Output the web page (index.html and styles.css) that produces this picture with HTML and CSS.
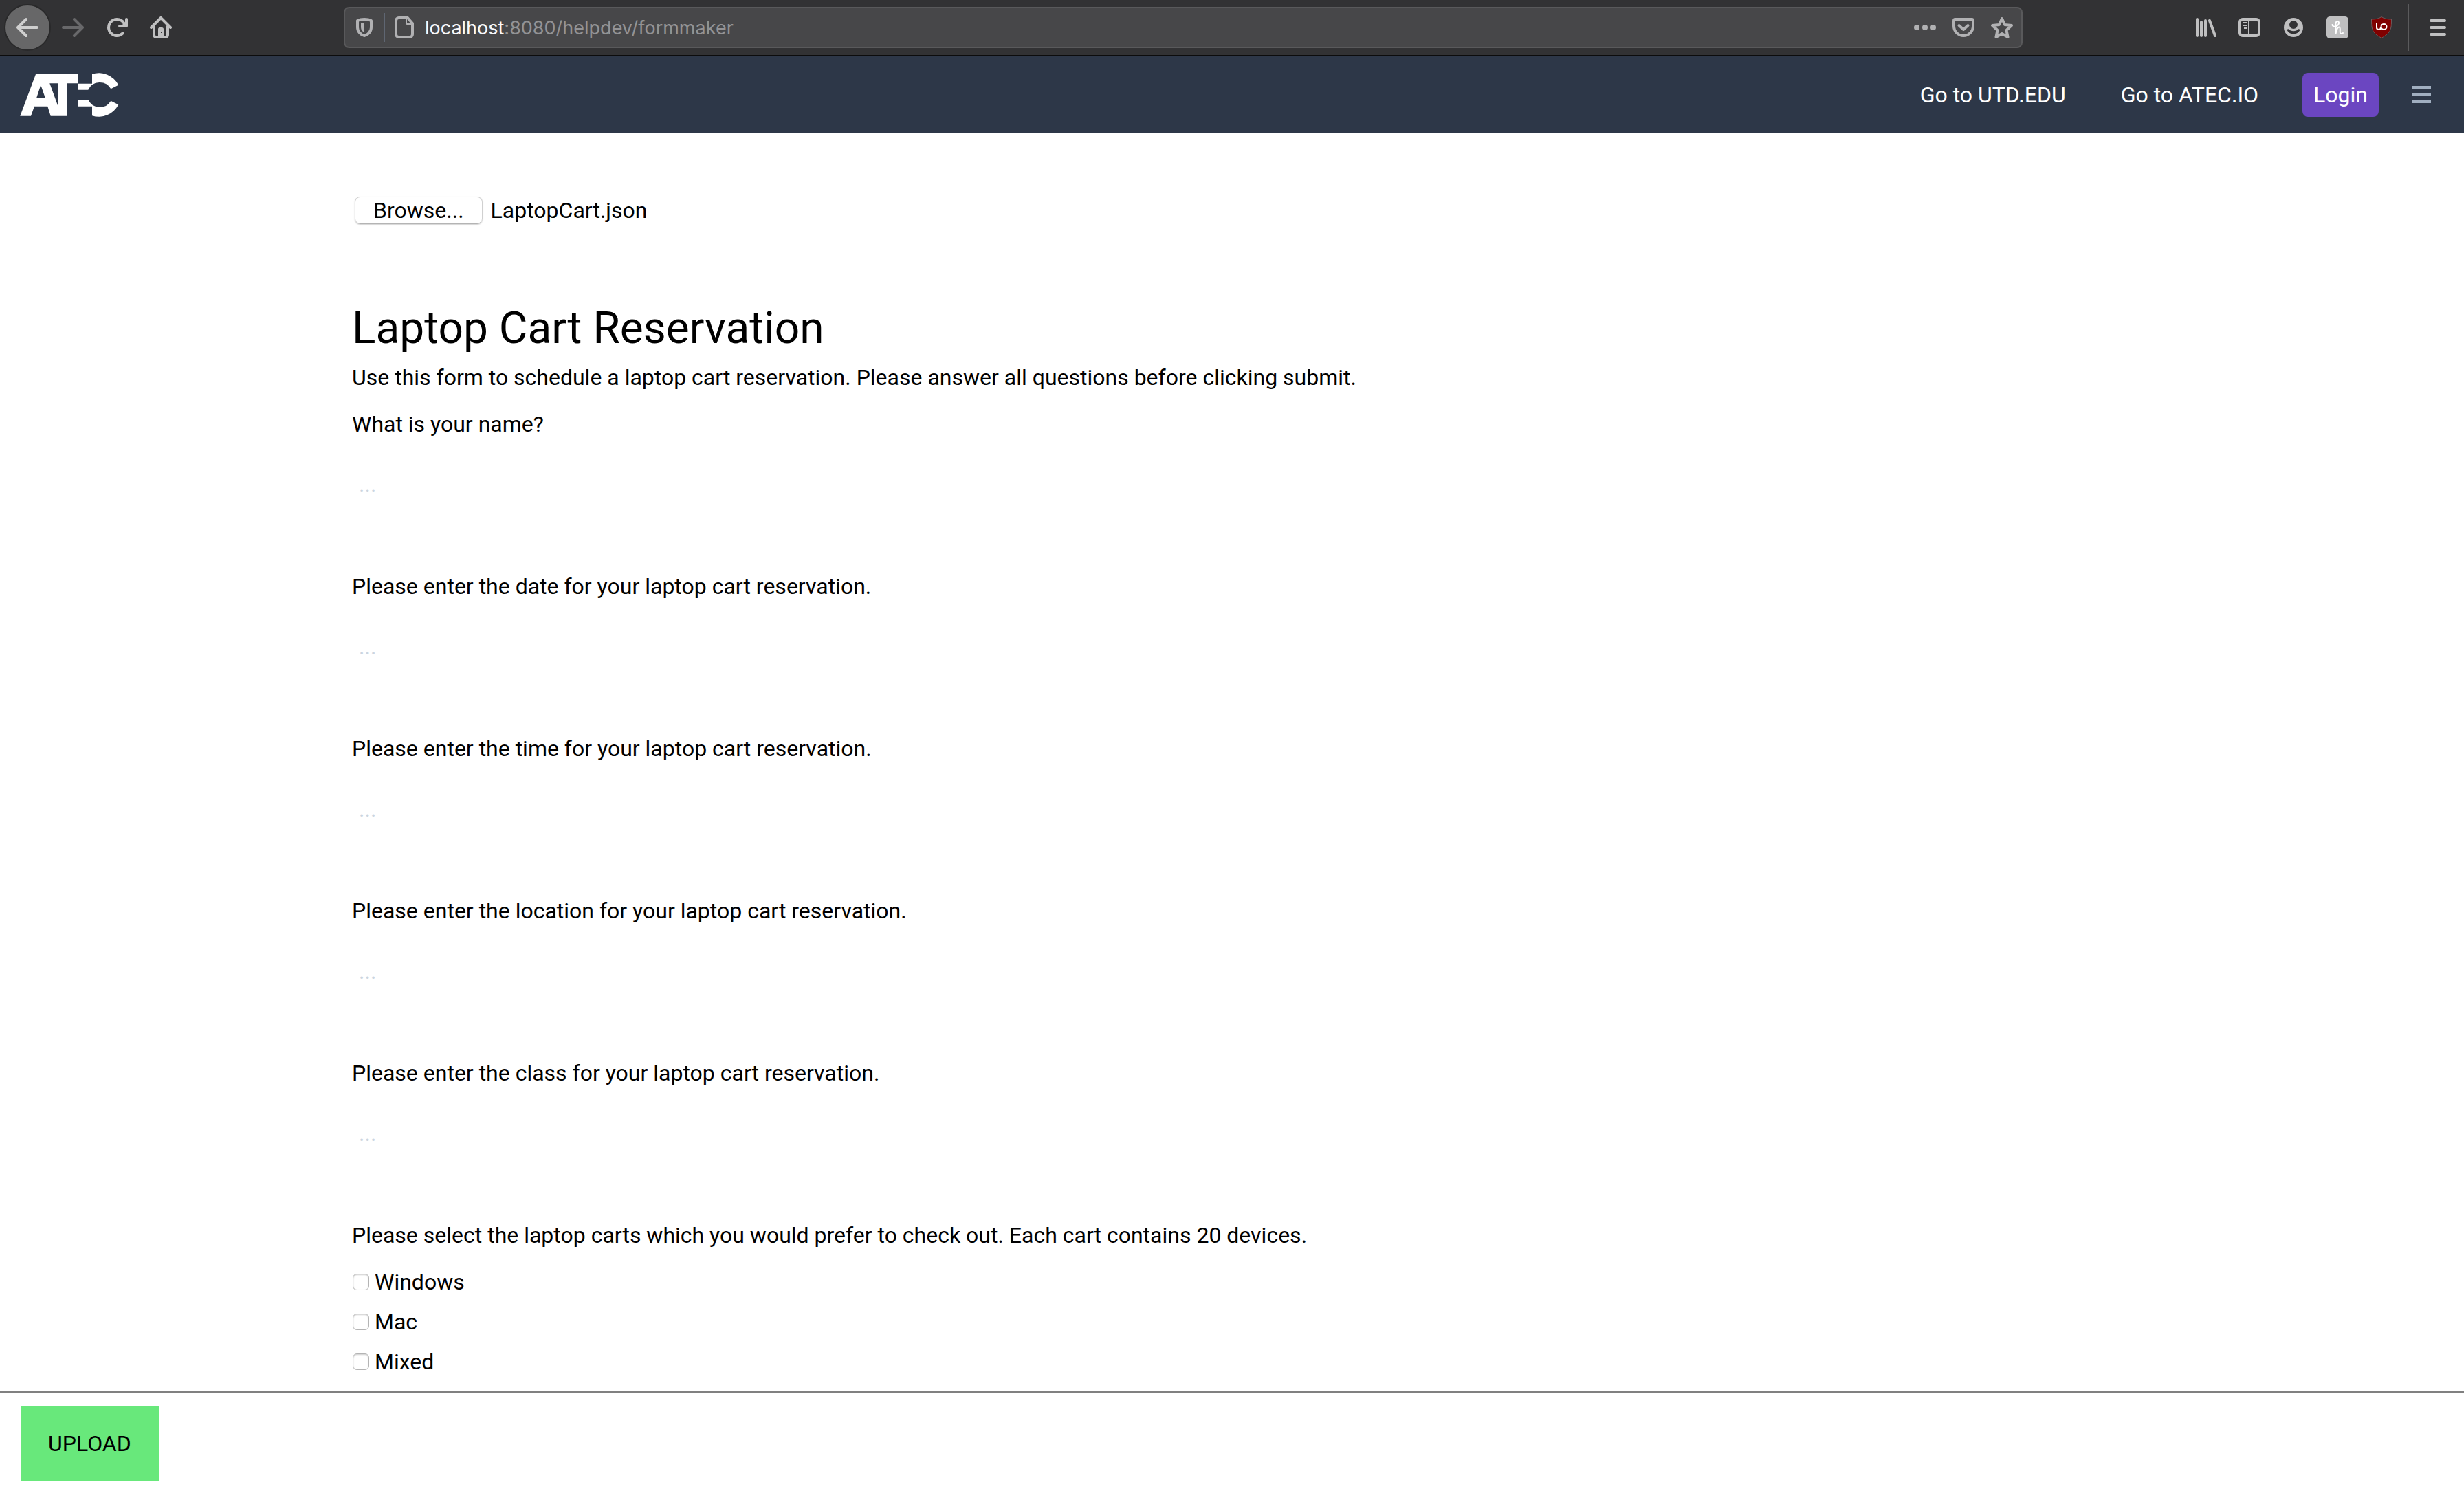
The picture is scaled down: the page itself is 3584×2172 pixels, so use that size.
FILE: index.html
```html
<!DOCTYPE html>
<html lang="en">
<head>
<meta charset="utf-8">
<title>Laptop Cart Reservation</title>
<link rel="stylesheet" href="styles.css">
</head>
<body>
<div class="toolbar">
  <div class="toolbar-nav">
    <button class="tool back" aria-label="Back"><svg viewBox="0 0 32 32"><path d="M30 16H2.500M14 4L2 16l12 12" fill="none" stroke="currentColor" stroke-width="4" stroke-linecap="round" stroke-linejoin="round"/></svg></button>
    <button class="tool forward" aria-label="Forward"><svg viewBox="0 0 32 32"><path d="M2 16h27.500M18 4l12 12-12 12" fill="none" stroke="currentColor" stroke-width="4" stroke-linecap="round" stroke-linejoin="round"/></svg></button>
    <button class="tool" aria-label="Reload"><svg viewBox="0 0 32 32"><path d="M24.500 24.500A12 12 0 1 1 27 11" fill="none" stroke="currentColor" stroke-width="4" stroke-linecap="round"/><path d="M30 4v10H20" fill="none" stroke="currentColor" stroke-width="4" stroke-linecap="round" stroke-linejoin="round"/><path d="M30 6v8h-8z" fill="currentColor"/></svg></button>
    <button class="tool" aria-label="Home"><svg viewBox="0 0 32 32"><path d="M2 16L16 2l14 14M6 14v13a3 3 0 0 0 3 3h14a3 3 0 0 0 3-3V14" fill="none" stroke="currentColor" stroke-width="4" stroke-linecap="round" stroke-linejoin="round"/><path fill-rule="evenodd" d="M12 30V18.500a2.500 2.500 0 0 1 2.500-2.500h3a2.500 2.500 0 0 1 2.500 2.500V30zM16 22v2h2v-2z" fill="currentColor"/></svg></button>
  </div>
  <div class="address">
    <svg class="icon" viewBox="0 0 32 32"><path d="M16 4c-3 0-8 1-10 2v10c0 6 5 11 10 12 5-1 10-6 10-12V6c-2-1-7-2-10-2z" fill="none" stroke="currentColor" stroke-width="4" stroke-linejoin="round"/><path d="M16 9c-2 0-4 .5-5 1v6c0 3 2 6 5 7z" fill="currentColor"/></svg>
    <span class="address-divider"></span>
    <svg class="icon" viewBox="0 0 32 32"><path d="M8 2h13l7 8v16a4 4 0 0 1-4 4H8a4 4 0 0 1-4-4V6a4 4 0 0 1 4-4z" fill="none" stroke="currentColor" stroke-width="4" stroke-linejoin="round"/><path d="M19 2v8a1 1 0 0 0 1 1h8" fill="none" stroke="currentColor" stroke-width="2"/></svg>
    <p class="url"><span class="url-host">localhost</span>:8080/helpdev/formmaker</p>
    <div class="address-actions">
      <svg class="icon" viewBox="0 0 32 32" fill="currentColor"><circle cx="4" cy="16" r="4"/><circle cx="16" cy="16" r="4"/><circle cx="28" cy="16" r="4"/></svg>
      <svg class="icon" viewBox="0 0 32 32" fill="none" stroke="currentColor" stroke-width="4" stroke-linejoin="round" stroke-linecap="round"><path d="M4 4h24a2 2 0 0 1 2 2v8a14 14 0 0 1-28 0V6a2 2 0 0 1 2-2z"/><path d="M9.500 13l6.500 6 6.500-6"/></svg>
      <svg class="icon" viewBox="0 0 32 32"><path d="M16 3l4 9 10 1-7.500 7 2 10L16 25l-8.500 5 2-10L2 13l10-1z" fill="none" stroke="currentColor" stroke-width="4" stroke-linejoin="round"/></svg>
    </div>
  </div>
  <div class="toolbar-tools">
    <button class="tool" aria-label="Library"><svg viewBox="0 0 32 32" fill="none" stroke="currentColor" stroke-width="4" stroke-linecap="round"><path d="M4 4v24M10 8v20M16 6v22M22 6l8 22"/></svg></button>
    <button class="tool" aria-label="Sidebars"><svg viewBox="0 0 32 32" fill="none" stroke="currentColor"><rect x="2" y="4" width="28" height="24" rx="4" stroke-width="4"/><path d="M15 5v22M6 9h6M6 13h6M8 17h4" stroke-width="2"/></svg></button>
    <button class="tool" aria-label="Account"><svg viewBox="0 0 32 32"><path fill-rule="evenodd" fill="currentColor" d="M16 2a14 14 0 1 0 0 28 14 14 0 0 0 0-28zM16 6a6 6 0 1 1 0 12 6 6 0 0 1 0-12zM9 18.500c3 3.500 11 3.500 14 0 1.500-.5 2.500.5 2 2-4 6.500-14 6.500-18 0-.5-1.500.5-2.500 2-2z"/></svg></button>
    <button class="tool" aria-label="Honey"><svg viewBox="0 0 32 32"><rect width="32" height="32" rx="5" fill="currentColor"/><path d="M8.500 12c0 4 8 3.500 9.500-2 .5-4-4-4-4.500 0-.5 5 .5 9 0 15 1-6 3-10 5-9.500 3 .5-.5 9 2.500 9.500 1.500 0 2.500-.5 3-1" fill="none" stroke="#fff" stroke-width="2" stroke-linecap="round" stroke-linejoin="round"/></svg></button>
    <button class="tool" aria-label="uBlock Origin"><svg viewBox="0 0 32 32"><path d="M16 .5C12 3.500 7 4 1.500 4c0 15 .5 19 14.500 27.500C30 23 30.500 19 30.500 4 25 4 20 3.500 16 .5z" fill="#800000" stroke="#6b5a5c"/><path d="M9 9.500v6.500a3 3 0 0 0 6 0v-1" fill="none" stroke="#fff" stroke-width="2"/><circle cx="19.500" cy="15" r="4" fill="none" stroke="#fff" stroke-width="2"/></svg></button>
    <span class="toolbar-divider"></span>
    <button class="tool" aria-label="Open menu"><svg viewBox="0 0 32 32" fill="none" stroke="currentColor" stroke-width="4" stroke-linecap="round"><path d="M6 6h20M6 16h20M6 26h20"/></svg></button>
  </div>
</div>

<header class="site-header">
  <a class="logo" href="#" aria-label="ATEC"><svg viewBox="0 0 144 64" fill="#fff"><path fill-rule="evenodd" d="M23.300 1.300H85v14H69v47.400H44.700L40.300 48.700H21L16 62.700H.3zM30.300 17.700L24.300 36h12.400zM43.300 15.300L55 47.300v-32z"/><path d="M85 15.700h20V1.800A32 32 0 0 1 143.300 17.700L132.300 23.300A18.700 18.700 0 0 0 99.300 24.700H85zM85 39h14.300A18.700 18.700 0 0 0 132.300 40.700L143.300 46.300A32 32 0 0 1 105 62.200V48.700H85z"/></svg></a>
  <nav class="site-nav">
    <a class="site-link" href="#">Go to UTD.EDU</a>
    <a class="site-link" href="#">Go to ATEC.IO</a>
  </nav>
  <button class="login">Login</button>
  <button class="site-menu" aria-label="Menu"><svg viewBox="0 0 28 26" fill="currentColor"><path d="M0 0h28v5H0zM0 10h28v5H0zM0 20h28v5H0z"/></svg></button>
</header>

<main class="content">
  <div class="file-picker">
    <label class="file-button" for="form-file">Browse...</label>
    <span>LaptopCart.json</span>
    <input class="file-input" id="form-file" type="file" accept=".json">
  </div>
  <form class="form" id="reservation">
    <h1 class="form-title">Laptop Cart Reservation</h1>
    <p class="form-intro">Use this form to schedule a laptop cart reservation. Please answer all questions before clicking submit.</p>
    <div class="question">
      <label for="q-name">What is your name?</label>
      <input class="answer" id="q-name" type="text" placeholder="...">
    </div>
    <div class="question">
      <label for="q-date">Please enter the date for your laptop cart reservation.</label>
      <input class="answer" id="q-date" type="text" placeholder="...">
    </div>
    <div class="question">
      <label for="q-time">Please enter the time for your laptop cart reservation.</label>
      <input class="answer" id="q-time" type="text" placeholder="...">
    </div>
    <div class="question">
      <label for="q-location">Please enter the location for your laptop cart reservation.</label>
      <input class="answer" id="q-location" type="text" placeholder="...">
    </div>
    <div class="question">
      <label for="q-class">Please enter the class for your laptop cart reservation.</label>
      <input class="answer" id="q-class" type="text" placeholder="...">
    </div>
    <fieldset class="choices">
      <legend class="choices-title">Please select the laptop carts which you would prefer to check out. Each cart contains 20 devices.</legend>
      <label class="choice"><input class="checkbox" type="checkbox">Windows</label>
      <label class="choice"><input class="checkbox" type="checkbox">Mac</label>
      <label class="choice"><input class="checkbox" type="checkbox">Mixed</label>
    </fieldset>
  </form>
</main>

<footer class="actions">
  <button class="upload" type="submit" form="reservation">UPLOAD</button>
</footer>
</body>
</html>
```
FILE: styles.css
```css
* {
  box-sizing: border-box;
  margin: 0;
  padding: 0;
}

body {
  display: flex;
  flex-direction: column;
  min-height: 100vh;
  background: #fff;
  color: #000;
  font: 32px/48px Roboto, sans-serif;
}

button,
input {
  border: 0;
  background: none;
  color: inherit;
  font: inherit;
}

svg {
  display: block;
}

/* Browser toolbar */
.toolbar {
  display: flex;
  align-items: center;
  height: 82px;
  border-bottom: 2px solid #0c0c0d;
  background: #323234;
  color: #bfbfc0;
}

.toolbar-nav {
  display: flex;
  align-items: center;
  gap: 32px;
  width: 500px;
  padding-left: 6px;
}

.tool svg,
.icon {
  width: 32px;
  height: 32px;
}

.back {
  padding: 16px;
  border: 2px solid #29292a;
  border-radius: 50%;
  margin-right: -16px;
  background: #676768;
  color: #cfcfcf;
}

.forward {
  color: #68686a;
}

.address {
  display: flex;
  flex: 1;
  align-items: center;
  gap: 12px;
  height: 60px;
  padding: 0 12px;
  border: 2px solid #59595b;
  border-radius: 8px;
  background: #474749;
  color: #b1b1b3;
}

.address-divider {
  width: 2px;
  height: 42px;
  background: #5f6672;
}

.url {
  flex: 1;
  padding: 2px 0 0 2px;
  color: #939395;
  font: 27px/36px Inter, sans-serif;
}

.url-host {
  color: #f9f9fa;
}

.address-actions {
  display: flex;
  gap: 24px;
}

.toolbar-tools {
  display: flex;
  align-items: center;
  gap: 32px;
  padding: 0 22px 0 250px;
}

.toolbar-divider {
  width: 2px;
  height: 68px;
  margin: 0 -6px 0 -10px;
  background: #5b5b5d;
}

/* Site header */
.site-header {
  display: flex;
  align-items: center;
  height: 112px;
  padding: 0 48px 0 29px;
  background: #2d3748;
  color: #fff;
}

.logo {
  margin-right: auto;
}

.logo svg {
  width: 144px;
  height: 64px;
}

.site-nav {
  display: flex;
  gap: 80px;
  margin-right: 64px;
}

.site-link {
  color: inherit;
  text-decoration: none;
}

.login {
  height: 64px;
  padding: 0 16px;
  border-radius: 8px;
  background: #6b46c1;
}

.site-menu {
  margin-left: 48px;
  color: #a0aec0;
}

.site-menu svg {
  width: 28px;
  height: 26px;
}

/* Form */
.content {
  flex: 1;
  width: 100%;
  max-width: 2560px;
  padding: 88px 0 16px;
  margin: 0 auto;
}

.file-picker {
  display: flex;
  position: relative;
  align-items: center;
  gap: 12px;
  width: fit-content;
  padding-left: 4px;
}

.file-button {
  height: 40px;
  padding: 0 26px;
  border: 1px solid #d0d0d0;
  border-bottom-color: #b4b4b4;
  border-radius: 8px;
  box-shadow: 0 1px 2px #0003;
  line-height: 38px;
}

.file-input {
  position: absolute;
  inset: 0;
  width: 100%;
  opacity: 0;
}

.form {
  margin-top: 108px;
}

.form-title {
  margin-bottom: 7px;
  font-size: 64px;
  font-weight: 400;
  line-height: 80px;
}

.form-intro {
  margin-bottom: 20px;
}

.question {
  display: flex;
  flex-direction: column;
  gap: 20px;
  margin-bottom: 80px;
}

.answer {
  height: 88px;
  padding: 20px 10px;
  line-height: 48px;
}

.answer::placeholder {
  color: #cbd5e0;
  opacity: 1;
}

.choices {
  display: flex;
  flex-direction: column;
  gap: 10px;
  border: 0;
}

.choices-title {
  margin-bottom: 20px;
}

.choice {
  display: flex;
  align-items: center;
  gap: 8px;
}

.checkbox {
  width: 24px;
  height: 24px;
  margin-left: 1px;
  border: 1px solid #b4b4b4;
  border-radius: 6px;
  box-shadow: inset 0 1px 2px #0003;
  appearance: none;
}

/* Bottom bar */
.actions {
  padding: 20px 30px 18px;
  border-top: 2px solid #808080;
}

.upload {
  display: block;
  height: 108px;
  padding: 0 40px;
  background: #68e87b;
}
```
